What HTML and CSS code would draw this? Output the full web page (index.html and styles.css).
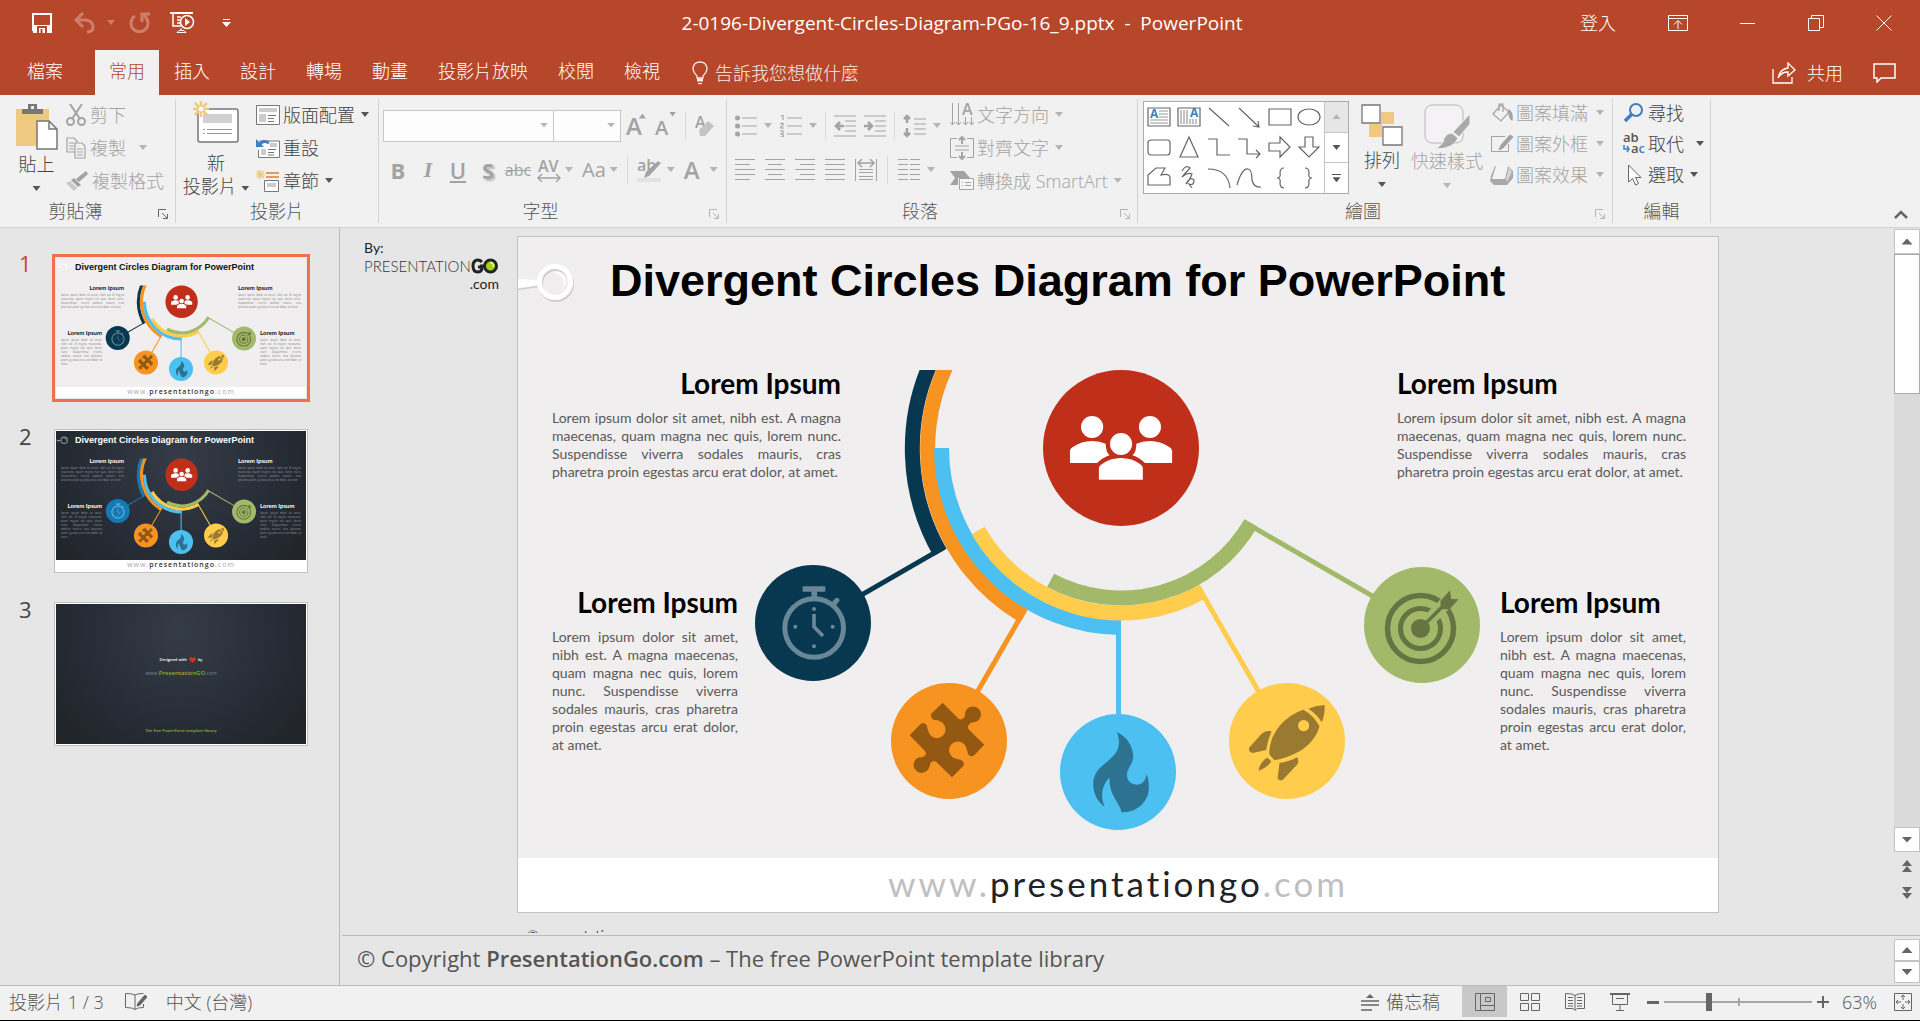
FILE: index.html
```html
<!DOCTYPE html>
<html lang="zh-Hant">
<head>
<meta charset="utf-8">
<title>2-0196-Divergent-Circles-Diagram-PGo-16_9.pptx - PowerPoint</title>
<link rel="stylesheet" href="styles.css">
</head>
<body>
<svg class="defs" aria-hidden="true">
  <symbol id="diagram" viewBox="0 0 1200 675">
    <clipPath id="cut"><rect x="0" y="133" width="1200" height="542"/></clipPath>
    <g fill="none" stroke-width="15">
      <g clip-path="url(#cut)">
        <path class="navy-line" d="M422 315.500A209 209 0 0 1 414.500 122"/>
        <path stroke="#f79320" d="M506 379A194 194 0 0 1 432 121"/>
      </g>
      <path stroke="#4cc0f0" d="M603 390.500A179.500 179.500 0 0 1 423.500 211"/>
      <path stroke="#ffcc4b" d="M685.500 353.900A165 165 0 0 1 460.100 293.500"/>
      <path stroke="#a2b969" d="M732.900 286A150 150 0 0 1 532.600 343.400"/>
    </g>
    <g transform="translate(603 211)">
      <rect class="navy" x="203" width="120" height="5" transform="rotate(150)"/>
      <rect fill="#f79320" x="187" width="110" height="5" transform="rotate(120)"/>
      <rect fill="#4cc0f0" x="173" width="110" height="5" transform="rotate(90)"/>
      <rect fill="#ffcc4b" x="158" width="130" height="5" transform="rotate(60)"/>
      <rect fill="#a2b969" x="143" width="160" height="5" transform="rotate(30)"/>
    </g>
    <circle cx="603" cy="211" r="78" fill="#c02f1a"/>
    <circle class="navy" cx="295" cy="386" r="58"/>
    <circle cx="431" cy="504" r="58" fill="#f79320"/>
    <circle cx="600" cy="535" r="58" fill="#4cc0f0"/>
    <circle cx="769" cy="504" r="58" fill="#ffcc4b"/>
    <circle cx="904" cy="388" r="58" fill="#a2b969"/>
    <g fill="#fff" transform="translate(342 103) scale(.3571 .3333)">
      <ellipse cx="650" cy="261" rx="31" ry="33"/><ellipse cx="812" cy="261" rx="31" ry="33"/><ellipse cx="731" cy="312" rx="31" ry="33"/>
      <path d="M588 369V333Q588 325 596 321Q620 303 650 303Q672 304 688 311Q688 335 699 346Q680 352 664 369Z"/>
      <path d="M874 369V333Q874 325 866 321Q842 303 812 303Q790 304 774 311Q774 335 763 346Q782 352 798 369Z"/>
      <path d="M669 419V385Q669 378 677 373Q700 354 731 354Q762 354 785 373Q792 378 792 385V419Z"/>
    </g>
    <g transform="translate(202 283) scale(.3333)">
      <g class="watch" fill="none">
        <circle cx="282.500" cy="324" r="88" stroke-width="15"/>
        <path stroke-width="17" d="M248 207H316M283 212V232"/>
        <path stroke-width="15" stroke-linecap="round" d="M343 249L351 241"/>
        <path stroke-width="11" d="M282 282V320L309 348"/>
        <path stroke-width="12" stroke-linecap="round" d="M226 320h.1M338 320h.1M282 267h.1M282 379h.1"/>
      </g>
      <path fill="#935811" d="M668 548L714 595Q724 604 733 592Q736 588 735 582A24 24 0 1 1 762 607Q750 606 744 619Q743 624 748 630L793 674L764 704Q752 714 744 702Q742 690 738 682A26 26 0 1 0 702 714Q708 718 722 719Q736 726 730 738L696 772L649 726Q638 718 630 732Q630 739 627 744A24 24 0 1 1 597 712Q610 714 617 705Q620 699 614 692L569 646L602 612Q612 605 620 616Q622 626 625 633A26 26 0 1 0 660 604Q655 600 642 600Q628 592 635 580Z"/>
      <path fill="#2d7391" d="M1190 636C1222 650 1240 680 1240 712C1238 735 1220 745 1221 768C1223 788 1240 794 1252 794C1272 792 1278 778 1279 763C1287 775 1288 800 1285 820C1276 855 1245 878 1204 877C1202 850 1168 830 1168 773C1146 795 1140 830 1154 860C1130 845 1118 815 1120 785C1125 730 1196 722 1197 668C1197 655 1194 645 1190 636Z"/>
    </g>
    <g fill="#9a7a30" fill-rule="evenodd" transform="translate(582 283) scale(.3954 .3333)">
      <path d="M514 569Q540 585 555 619C545 665 510 705 441 721L428 703C428 640 465 590 514 569ZM515 600a14 17 0 1 0 .1 0Z"/>
      <path d="M527 566Q548 556 568 555Q570 580 561 607Q548 582 527 566Z"/>
      <path d="M377 690V683L410 640Q422 630 434 634Q424 660 420 690L386 699Q378 697 377 690Z"/>
      <path d="M402 752Q400 745 408 730Q418 714 424 713L433 724Q424 742 402 752Z"/>
      <path d="M454 729Q480 725 498 712Q504 718 500 732L462 780Q452 784 449 775Z"/>
    </g>
    <g fill="none" stroke="#657442">
      <circle cx="902.500" cy="391.500" r="33" stroke-width="5.500"/>
      <circle cx="902.500" cy="391.500" r="20" stroke-width="5"/>
      <path stroke="#a2b969" stroke-width="13" d="M912 382L938 356"/>
      <circle cx="902.500" cy="391.500" r="9.500" fill="#657442" stroke="none"/>
      <path stroke-width="3.500" d="M903 391L926 368"/>
      <path fill="#657442" stroke="none" d="M922.400 364L932 353.300L933.100 362L940.600 362.300L931.200 372.500L922.800 372Z"/>
    </g>
    <circle class="lens-shade" cx="38" cy="47" r="15.500" fill="none" stroke-width="5"/>
    <path class="lens-shade" d="M0 52.500L20 49.500" stroke-width="1.500"/>
    <g class="lens">
      <path d="M0 42L21 43V48L0 51Z"/>
      <circle cx="37" cy="45" r="15.500" fill="none" stroke-width="5"/>
      <path d="M34 35Q46 37 46 48Q45 52 43 54Q50 47 46 39Q42 33 34 35Z"/>
    </g>
  </symbol>
</svg>

<header class="titlebar">
  <div class="qat">
    <button class="ib" aria-label="儲存"><svg width="20" height="20" fill="none" stroke="#fff" stroke-width="2"><path d="M1 1H19V19H3L1 17Z"/><path fill="#fff" d="M2 13H18V19H2Z"/><path stroke="#b7472a" d="M6 20V14H14V20M9.500 16V20"/></svg></button>
    <button class="ib dim" aria-label="復原"><svg width="42" height="22" fill="none" stroke="#fff" stroke-width="3"><path d="M10 1L3 8L10 15M3 8H13Q20 9 20 15Q20 20 14 20"/><path fill="#fff" stroke="none" d="M34 8H42L38 13Z"/></svg></button>
    <button class="ib dim" aria-label="重複"><svg width="21" height="22" fill="none" stroke="#fff" stroke-width="3"><path d="M6 4A8.500 8.500 0 1 0 15 4M13 10V2H21"/></svg></button>
    <button class="ib" aria-label="從首張投影片"><svg width="25" height="22" fill="none" stroke="#fff"><path stroke-width="2" d="M0 1H23"/><path stroke-width="1.500" d="M3 2V14H11M7 5H11M7 8H10M7 11H10"/><circle cx="17" cy="10" r="6.500" stroke-width="1.500"/><path fill="#fff" stroke="none" d="M15 6V14L20 10Z"/><path d="M11 16V19M7 20.500L9 18.500H14L16 20.500Z"/></svg></button>
    <button class="ib" aria-label="自訂快速存取工具列"><svg width="9" height="9" fill="#fff"><path d="M1 0H8V1H1ZM0 3H9L4.500 8Z"/></svg></button>
  </div>
  <h1 class="doc-title">2-0196-Divergent-Circles-Diagram-PGo-16_9.pptx&nbsp; -&nbsp; PowerPoint</h1>
  <div class="window-controls">
    <button class="signin">登入</button>
    <button class="ib" aria-label="功能區顯示選項"><svg width="20" height="16" fill="none" stroke="#fff"><path d="M.500 .500H19.500V15.500H.500ZM.500 3.500H19.500M10 14V6M6 9.500L10 5.500L14 9.500"/></svg></button>
    <button class="ib" aria-label="最小化"><svg width="16" height="16"><path fill="#fff" d="M0 8H15V9H0Z"/></svg></button>
    <button class="ib" aria-label="還原"><svg width="16" height="16" fill="none" stroke="#fff"><path d="M.500 3.500H11.500V15.500H.500ZM3.500 3V.500H15.500V12.500H12"/></svg></button>
    <button class="ib" aria-label="關閉"><svg width="16" height="16" stroke="#fff"><path d="M.500 .500L15.500 15.500M15.500 .500L.500 15.500"/></svg></button>
  </div>
</header>

<nav class="tabs">
  <button class="tab file">檔案</button>
  <button class="tab active">常用</button>
  <button class="tab">插入</button>
  <button class="tab">設計</button>
  <button class="tab">轉場</button>
  <button class="tab">動畫</button>
  <button class="tab">投影片放映</button>
  <button class="tab">校閱</button>
  <button class="tab">檢視</button>
  <button class="tell"><svg width="16" height="24" fill="none" stroke="#fff" stroke-width="1.300"><path d="M5 17V15Q1 11 1 7Q2 1 8 1Q14 1 15 7Q15 11 11 15V17Z"/><path stroke-width="3" d="M5 19H11"/><path d="M6 22.500H10"/></svg>告訴我您想做什麼</button>
  <button class="share"><svg width="24" height="22" fill="none" stroke="#fff" stroke-width="1.300"><path d="M1 7V21H20V15M6 16Q8 7 16 6V1L23 8L16 14V10Q9 10 6 16Z"/></svg>共用</button>
  <button class="ib" aria-label="註解"><svg width="23" height="20" fill="none" stroke="#fff" stroke-width="1.500"><path d="M1 1H22V15H8L4 19V15H1Z"/></svg></button>
</nav>

<section class="ribbon">
  <div class="group clip">
    <div class="group-body">
      <button class="big"><svg width="42" height="46" fill="none" stroke="#777" stroke-width="1.500"><path fill="#efc980" stroke="none" d="M0 5H33V42H0Z"/><path fill="#777" stroke="none" d="M6 10V5H12V0H21V5H27V10Z"/><path fill="#f1f1f1" stroke="none" d="M15 2H18V5H15Z"/><path fill="#fff" d="M21 17H33L41 25V45H21ZM33 17V25H41"/></svg><span>貼上</span><i class="caret"></i></button>
      <div class="rows">
        <button class="row off"><svg width="20" height="22" fill="none" stroke="#a3a3a3" stroke-width="2"><path d="M4 0L14 15M16 0L6 15"/><circle cx="4.500" cy="17.500" r="3.500"/><circle cx="15.500" cy="17.500" r="3.500"/></svg>剪下</button>
        <button class="row off"><svg width="20" height="22" fill="#f1f1f1" stroke="#a3a3a3" stroke-width="1.200"><path d="M1 1H8L11 4V15H1ZM3 6H8M3 9H8M3 12H8"/><path d="M9 6H16L19 9V21H9ZM11 12H17M11 15H17M11 18H17"/></svg>複製<i class="caret far"></i></button>
        <button class="row off"><svg width="22" height="20" fill="#a3a3a3"><path d="M20 0L22 3L13 11L10 8Z"/><path d="M8 7L15 14L12 16L5 9Z"/><path fill="#c8c8c8" d="M4 10L11 17L8 20L0 12Z"/></svg>複製格式</button>
      </div>
    </div>
    <div class="group-label launch">剪貼簿<svg class="launcher on" width="10" height="10"><use href="#launch"/></svg></div>
  </div>
  <div class="group slides">
    <div class="group-body">
      <button class="big"><svg width="46" height="42" fill="none"><path fill="#fff" stroke="#777" stroke-width="1.500" d="M7 8H43Q45 8 45 10V39Q45 41 43 41H7Q5 41 5 39V10Q5 8 7 8Z"/><path fill="#d0d0d0" d="M10 13H39V22H10Z"/><path stroke="#999" d="M14 28.500H39M14 32.500H39M10 28.500H12M10 32.500H12"/><path stroke="#efc980" stroke-width="2.500" d="M8 0V16M0 8H16M2 2L14 14M14 2L2 14"/><circle cx="8" cy="8" r="3" fill="#fff" stroke="#efc980"/></svg><span>新</span><span>投影片 <i class="caret"></i></span></button>
      <div class="rows">
        <button class="row"><svg width="24" height="20" fill="none" stroke="#777"><path fill="#fff" d="M.500 .500H23.500V19.500H.500Z"/><path fill="#ccc" stroke="none" d="M3 3H21V7H3ZM3 9H10V17H3Z"/><path d="M12 10.500H20M12 13.500H18M12 16.500H18"/></svg>版面配置<i class="caret"></i></button>
        <button class="row"><svg width="24" height="20" fill="none" stroke="#777"><path fill="#fff" d="M3 3H23.500V19.500H2.500V12"/><path fill="#ccc" stroke="none" d="M5 11H10V17H5ZM14 5H21V9H14Z"/><path d="M12 11.500H20M12 14.500H18M12 17H18"/><path stroke="#3f7fbf" stroke-width="3" d="M3 8Q6 1 13 5"/><path fill="#3f7fbf" stroke="none" d="M0 1V9H8Z"/></svg>重設</button>
        <button class="row"><svg width="24" height="22" fill="none"><path stroke="#e08020" stroke-width="1.500" d="M10 3H23M10 7H23"/><path fill="#fff" stroke="#777" d="M8.500 10.500H22.500V21.500H8.500Z"/><path fill="#ccc" d="M11 13H20V17H11Z"/><path stroke="#efc980" stroke-width="1.500" d="M4 0V9M0 4.500H9M1 1L8 8M8 1L1 8"/></svg>章節<i class="caret"></i></button>
      </div>
    </div>
    <div class="group-label">投影片</div>
  </div>
  <div class="group font">
    <div class="group-body stack">
      <div class="line">
        <div class="combos"><span class="combo wide"><select aria-label="字型"><option></option></select><i class="caret pale"></i></span><span class="combo"><select aria-label="字型大小"><option></option></select><i class="caret pale"></i></span></div>
        <button class="glyph" aria-label="放大字型">A<sup class="up"></sup></button>
        <button class="glyph small" aria-label="縮小字型">A<sup class="down"></sup></button>
        <i class="sep"></i>
        <button class="ib" aria-label="清除格式設定"><svg width="20" height="24"><text x="0" y="14" class="a16">A</text><path fill="#c4c4c4" d="M4 16L13 7L19 12L10 22L5 22Z"/></svg></button>
      </div>
      <div class="line two">
        <div class="marks"><button class="b">B</button><button class="i">I</button><button class="u">U</button><button class="s">S</button><button class="abc">abc</button></div>
        <button class="drop"><svg width="24" height="24" fill="none" stroke="#a3a3a3" stroke-width="1.500"><text x="1" y="14" class="a16">AV</text><path d="M1 20H23M5 16L1 20L5 24M19 16L23 20L19 24"/></svg><i class="caret pale"></i></button>
        <button class="drop aa">Aa<i class="caret pale"></i></button>
        <i class="sep"></i>
        <button class="drop"><svg width="26" height="24"><text x="0" y="13" class="a16">ab</text><path fill="#e2e2e2" d="M0 20H24V24H0Z"/><path fill="#a3a3a3" d="M21 3L24 5L12 18L7 20L9 14Z"/></svg><i class="caret pale"></i></button>
        <button class="drop acol">A<i class="caret pale"></i></button>
      </div>
    </div>
    <div class="group-label launch">字型<svg class="launcher" width="10" height="10"><use href="#launch"/></svg></div>
  </div>
  <div class="group para">
    <div class="group-body">
      <div class="stack">
        <div class="line">
          <button class="drop" aria-label="項目符號"><svg width="22" height="22" stroke="#a3a3a3" stroke-width="1.200" fill="#a3a3a3"><path d="M7 3H22M7 11H22M7 19H22"/><circle cx="2.500" cy="3" r="2"/><circle cx="2.500" cy="11" r="2"/><circle cx="2.500" cy="19" r="2"/></svg><i class="caret pale"></i></button>
          <button class="drop" aria-label="編號"><svg width="22" height="22" stroke="#a3a3a3" stroke-width="1.200" fill="none"><path d="M7 3H22M7 11H22M7 19H22M1 1L3 0V5M0 9Q4 7 3 10L0 13H4M0 16Q4 15 3 18L1 19Q5 20 3 22H0"/></svg><i class="caret pale"></i></button>
          <i class="sep"></i>
          <button class="ib" aria-label="減少清單階層"><svg width="22" height="22" stroke="#a3a3a3" stroke-width="1.200" fill="none"><path d="M0 1H22M11 6H22M11 11H22M11 16H22M0 21H22"/><path stroke-width="2.500" d="M10 11H2M6 7L2 11L6 15"/></svg></button>
          <button class="ib" aria-label="增加清單階層"><svg width="22" height="22" stroke="#a3a3a3" stroke-width="1.200" fill="none"><path d="M0 1H22M11 6H22M11 11H22M11 16H22M0 21H22"/><path stroke-width="2.500" d="M0 11H8M4 7L8 11L4 15"/></svg></button>
          <i class="sep"></i>
          <button class="drop" aria-label="行距"><svg width="23" height="24" stroke="#a3a3a3" stroke-width="1.200" fill="none"><path d="M11 5H23M11 10H23M11 15H23M11 20H23"/><path stroke-width="2.500" d="M4 2V9M1 5L4 2L7 5M4 14V22M1 19L4 22L7 19"/></svg><i class="caret pale"></i></button>
        </div>
        <div class="line two aligns">
          <button class="ib" aria-label="靠左對齊"><svg width="20" height="22" stroke="#a3a3a3"><path d="M0 .500H20M0 5.500H15M0 10.500H20M0 15.500H20M0 20.500H15"/></svg></button>
          <button class="ib" aria-label="置中"><svg width="20" height="22" stroke="#a3a3a3"><path d="M0 .500H20M3 5.500H17M0 10.500H20M3 15.500H17M0 20.500H20"/></svg></button>
          <button class="ib" aria-label="靠右對齊"><svg width="20" height="22" stroke="#a3a3a3"><path d="M0 .500H20M5 5.500H20M0 10.500H20M5 15.500H20M0 20.500H20"/></svg></button>
          <button class="ib" aria-label="左右對齊"><svg width="20" height="22" stroke="#a3a3a3"><path d="M0 .500H20M0 5.500H20M0 10.500H20M0 15.500H20M0 20.500H20"/></svg></button>
          <button class="ib" aria-label="分散對齊"><svg width="22" height="22" stroke="#a3a3a3" fill="none"><path d="M.500 0V22M21.500 0V22M4 10.500H18M4 13.500H18M4 17.500H18M4 20.500H18"/><path stroke-width="1.500" d="M3 4H19M7 0L3 4L7 8M15 0L19 4L15 8"/></svg></button>
          <i class="sep"></i>
          <button class="drop" aria-label="欄"><svg width="22" height="22" stroke="#a3a3a3"><path d="M0 .500H10M12 .500H22M0 5.500H10M12 5.500H22M0 10.500H10M12 10.500H22M0 15.500H10M12 15.500H22M0 20.500H10M12 20.500H22"/></svg><i class="caret pale"></i></button>
        </div>
      </div>
      <div class="rows">
        <button class="row off"><svg width="24" height="24" fill="none" stroke="#a3a3a3"><path d="M2.500 0V22M8.500 0V22M15.500 14V22M21.500 14V22M0 19L2.500 22L5 19M6 19L8.500 22L11 19M13 19L15.500 22L18 19M19 19L21.500 22L24 19"/><text x="12" y="12" class="a16">A</text></svg>文字方向<i class="caret"></i></button>
        <button class="row off"><svg width="24" height="24" fill="none" stroke="#a3a3a3"><path d="M7 2.500H.500V21.500H7M17 2.500H23.500V21.500H17M5 10H19M5 14H19"/><path stroke-width="2" d="M12 8V2M9 4L12 1L15 4M12 16V22M9 20L12 23L15 20"/></svg>對齊文字<i class="caret"></i></button>
        <button class="row off"><svg width="24" height="20" fill="#a3a3a3"><path d="M0 0H14L20 7H8V14H0L5 7Z"/><path fill="#f6f6f6" stroke="#a3a3a3" d="M9.500 7.500H23.500V18.500H9.500Z"/><path stroke="#a3a3a3" d="M12 11.500H13M15 11.500H21M12 14.500H13M15 14.500H21"/></svg>轉換成 SmartArt<i class="caret"></i></button>
      </div>
    </div>
    <div class="group-label launch">段落<svg class="launcher" width="10" height="10"><use href="#launch"/></svg></div>
  </div>
  <div class="group draw">
    <div class="group-body">
      <div class="gallery">
        <svg width="180" height="91" fill="none" stroke="#666" stroke-width="1.200">
          <path d="M4 6H26V24H4ZM34 6H56V24H34Z"/><path stroke="#999" d="M15 9H24M15 12H24M15 15H24M6 18H24M6 21H24M37 8V22M40 8V22M43 8V22M46 17V22M49 17V22M52 17V22"/>
          <text x="6" y="16" class="blue">A</text><text x="46" y="15" class="blue">A</text>
          <path d="M65 6L85 24M95 6L115 25M109 24L115 25L114 19M125 7H147V23H125Z"/><ellipse cx="165" cy="15" rx="11" ry="8"/>
          <rect x="4" y="38" width="22" height="15" rx="3"/><path d="M45 35L54 55H36ZM64 37H73V53H86M94 37H103V52H116M112 48L116 52L112 56M125 41H136V35L146 45L136 55V49H125ZM161 35H169V45H175L165 55L155 45H161Z"/>
          <path d="M4 83V73L12 66H21L17 73Q25 71 26 75V83ZM38 69Q42 62 46 66L38 75Q44 70 48 72Q46 78 42 82Q46 74 50 78Q50 84 45 82L48 86M64 67Q84 67 86 86M93 83Q98 66 104 67Q108 67 108 78Q110 86 117 85M140 66Q136 66 136 71Q137 76 133 76Q137 76 136 81Q136 86 140 86M161 66Q165 66 165 71Q164 76 168 76Q164 76 165 81Q165 86 161 86"/>
        </svg>
        <div class="gallery-nav"><button class="gn dis" aria-label="上一列"><i class="caret flip pale"></i></button><button class="gn" aria-label="下一列"><i class="caret"></i></button><button class="gn more" aria-label="其他"><i class="caret"></i></button></div>
      </div>
      <button class="big"><svg width="42" height="42" stroke="#777" fill="#fff" stroke-width="1.300"><path fill="#efc980" stroke="none" d="M20 8H33V20H20ZM8 20H21V33H8Z"/><path d="M1 1H19V19H1ZM22 23H41V41H22Z"/></svg><span>排列</span><i class="caret"></i></button>
      <button class="big off"><svg width="46" height="46"><rect x="1" y="1" width="38" height="38" rx="7" fill="#f4f2f5" stroke="#b5b5b5"/><path fill="#a9a9a9" stroke="#f1f1f1" d="M46 10V20L35 33L29 28ZM28 29L34 34Q30 45 11 45Q20 40 20 34Q23 29 28 29Z"/></svg><span>快速樣式</span><i class="caret"></i></button>
      <div class="rows tight">
        <button class="row off"><svg width="23" height="20" fill="none" stroke="#a3a3a3" stroke-width="1.200"><path d="M11 2L3 11L11 18L19 9ZM9 8V1H13V9"/><path fill="#a3a3a3" d="M19 7Q23 10 22 17Q19 15 19 9Z"/></svg>圖案填滿<i class="caret"></i></button>
        <button class="row off"><svg width="23" height="20" fill="none" stroke="#a3a3a3"><path d="M15 2.500H1.500V17.500H18.500V10"/><path fill="#a3a3a3" d="M20 1L23 3L13 14L9 16L11 11Z"/></svg>圖案外框<i class="caret"></i></button>
        <button class="row off"><svg width="23" height="20"><path fill="#a9a9a9" d="M5 1H18L23 6V13L17 20H4L0 16L1 11Z"/><path fill="#f4f4f4" d="M6 1H18L15 14H2Z"/><path fill="#d5d5d5" d="M19 2L22 7L17 17L16 14Z"/></svg>圖案效果<i class="caret"></i></button>
      </div>
    </div>
    <div class="group-label launch">繪圖<svg class="launcher" width="10" height="10"><use href="#launch"/></svg></div>
  </div>
  <div class="group edit">
    <div class="group-body">
      <div class="rows tight">
        <button class="row"><svg width="22" height="20" fill="none" stroke="#3f7fbf"><circle cx="13" cy="7" r="6" stroke-width="2"/><path stroke-width="3.500" d="M9 11L2 18"/></svg>尋找</button>
        <button class="row"><svg width="22" height="22"><text x="0" y="9" class="rep">ab</text><text x="8" y="20" class="rep">a<tspan fill="#3f7fbf">c</tspan></text><path fill="none" stroke="#3f7fbf" stroke-width="1.500" d="M1 12V16H6M4 13L6 16L4 19"/></svg>取代<i class="caret far"></i></button>
        <button class="row"><svg width="22" height="22" fill="#fff" stroke="#666"><path d="M5.500 1V18L9.500 14.500L12.500 21L15.500 19.500L12.500 13.500H18Z"/></svg>選取<i class="caret"></i></button>
      </div>
    </div>
    <div class="group-label">編輯</div>
  </div>
  <button class="collapse" aria-label="摺疊功能區"><svg width="14" height="9" fill="none" stroke="#666" stroke-width="2.500"><path d="M1 8L7 2L13 8"/></svg></button>
</section>
<svg class="defs" aria-hidden="true"><symbol id="launch" viewBox="0 0 10 10"><path fill="none" stroke="currentColor" d="M.500 8V.500H8M4 4L9 9M9.500 5V9.500H5"/></symbol></svg>

<main class="work">
  <aside class="pane">
    <div class="item current"><span class="num">1</span>
      <div class="thumb light">
        <svg class="art" viewBox="0 0 1200 675"><use href="#diagram"/></svg>
        <b class="t-title">Divergent Circles Diagram for PowerPoint</b>
        <div class="t-text tl"><b>Lorem Ipsum</b><p>Lorem ipsum dolor sit amet, nibh est. A magna maecenas, quam magna nec quis, lorem nunc. Suspendisse viverra sodales mauris, cras pharetra proin egestas arcu erat dolor, at amet.</p></div>
        <div class="t-text tr"><b>Lorem Ipsum</b><p>Lorem ipsum dolor sit amet, nibh est. A magna maecenas, quam magna nec quis, lorem nunc. Suspendisse viverra sodales mauris, cras pharetra proin egestas arcu erat dolor, at amet.</p></div>
        <div class="t-text bl"><b>Lorem Ipsum</b><p>Lorem ipsum dolor sit amet, nibh est. A magna maecenas, quam magna nec quis, lorem nunc. Suspendisse viverra sodales mauris, cras pharetra proin egestas arcu erat dolor, at amet.</p></div>
        <div class="t-text br"><b>Lorem Ipsum</b><p>Lorem ipsum dolor sit amet, nibh est. A magna maecenas, quam magna nec quis, lorem nunc. Suspendisse viverra sodales mauris, cras pharetra proin egestas arcu erat dolor, at amet.</p></div>
        <div class="t-foot">www.<b>presentationgo</b>.com</div>
      </div>
    </div>
    <div class="item"><span class="num">2</span>
      <div class="thumb dark">
        <svg class="art" viewBox="0 0 1200 675"><use href="#diagram"/></svg>
        <b class="t-title">Divergent Circles Diagram for PowerPoint</b>
        <div class="t-text tl"><b>Lorem Ipsum</b><p>Lorem ipsum dolor sit amet, nibh est. A magna maecenas, quam magna nec quis, lorem nunc. Suspendisse viverra sodales mauris, cras pharetra proin egestas arcu erat dolor, at amet.</p></div>
        <div class="t-text tr"><b>Lorem Ipsum</b><p>Lorem ipsum dolor sit amet, nibh est. A magna maecenas, quam magna nec quis, lorem nunc. Suspendisse viverra sodales mauris, cras pharetra proin egestas arcu erat dolor, at amet.</p></div>
        <div class="t-text bl"><b>Lorem Ipsum</b><p>Lorem ipsum dolor sit amet, nibh est. A magna maecenas, quam magna nec quis, lorem nunc. Suspendisse viverra sodales mauris, cras pharetra proin egestas arcu erat dolor, at amet.</p></div>
        <div class="t-text br"><b>Lorem Ipsum</b><p>Lorem ipsum dolor sit amet, nibh est. A magna maecenas, quam magna nec quis, lorem nunc. Suspendisse viverra sodales mauris, cras pharetra proin egestas arcu erat dolor, at amet.</p></div>
        <div class="t-foot">www.<b>presentationgo</b>.com</div>
      </div>
    </div>
    <div class="item"><span class="num">3</span>
      <div class="thumb dark credits">
        <p class="c-by">Designed with <svg width="7" height="6" viewBox="0 0 7 6"><path fill="#d2321e" d="M3.500 6L0 2.500Q0 0 2 0L3.500 1L5 0Q7 0 7 2.500Z"/></svg> by</p>
        <p class="c-www">www.<span>PresentationGO</span>.com</p>
        <p class="c-lib">The free PowerPoint template library</p>
      </div>
    </div>
  </aside>
  <div class="editor">
    <div class="stage-row">
      <div class="stage">
        <div class="slide">
          <div class="brand"><span>By:</span><span class="logo">PRESENTATION<svg width="27" height="16" fill="none" stroke="#222" stroke-width="3"><path d="M11 4Q9 2 7 2Q2 2 2 8Q2 14 7 14Q11 14 11 9H7M9 8H14"/><circle cx="19.500" cy="8" r="6" fill="#a4d20a"/><path stroke="#e8f7b0" stroke-width="1.500" d="M19 4.500Q23 5 22.500 9"/></svg></span><span class="com">.com</span></div>
          <svg class="art" viewBox="0 0 1200 675"><use href="#diagram"/></svg>
          <h2 class="s-title">Divergent Circles Diagram for PowerPoint</h2>
          <div class="s-text tl"><h3>Lorem Ipsum</h3><p>Lorem ipsum dolor sit amet, nibh est. A magna maecenas, quam magna nec quis, lorem nunc. Suspendisse viverra sodales mauris, cras pharetra proin egestas arcu erat dolor, at amet.</p></div>
          <div class="s-text tr"><h3>Lorem Ipsum</h3><p>Lorem ipsum dolor sit amet, nibh est. A magna maecenas, quam magna nec quis, lorem nunc. Suspendisse viverra sodales mauris, cras pharetra proin egestas arcu erat dolor, at amet.</p></div>
          <div class="s-text bl"><h3>Lorem Ipsum</h3><p>Lorem ipsum dolor sit amet, nibh est. A magna maecenas, quam magna nec quis, lorem nunc. Suspendisse viverra sodales mauris, cras pharetra proin egestas arcu erat dolor, at amet.</p></div>
          <div class="s-text br"><h3>Lorem Ipsum</h3><p>Lorem ipsum dolor sit amet, nibh est. A magna maecenas, quam magna nec quis, lorem nunc. Suspendisse viverra sodales mauris, cras pharetra proin egestas arcu erat dolor, at amet.</p></div>
          <div class="s-foot">www.<b>presentationgo</b>.com</div>
          <div class="below">© presentationgo.com</div>
        </div>
      </div>
      <div class="scroll">
        <button class="sb" aria-label="向上捲動"><i class="caret flip"></i></button>
        <div class="track"><div class="grip"></div></div>
        <button class="sb" aria-label="向下捲動"><i class="caret"></i></button>
        <button class="jump" aria-label="上一張投影片"><i class="caret flip"></i><i class="caret flip"></i></button>
        <button class="jump" aria-label="下一張投影片"><i class="caret"></i><i class="caret"></i></button>
      </div>
    </div>
    <div class="notes"><p>© Copyright <b>PresentationGo.com</b> – The free PowerPoint template library</p>
      <div class="notes-scroll"><button class="sb" aria-label="向上"><i class="caret flip"></i></button><button class="sb" aria-label="向下"><i class="caret"></i></button></div>
    </div>
  </div>
</main>

<footer class="status">
  <span>投影片 1 / 3</span>
  <button class="ib" aria-label="校對"><svg width="22" height="18" fill="none" stroke="#666"><path d="M10 2Q8 .500 .500 .500V14.500Q8 14.500 10 16.500Q12 14.500 18.500 14.500V11M10 2Q12 .500 18.500 .500M10 2V16.500"/><path fill="#666" d="M20 2L22 4L15 12L12 13L13 10Z"/></svg></button>
  <span class="lang">中文 (台灣)</span>
  <button class="notes-btn"><svg width="18" height="18" fill="none" stroke="#666" stroke-width="1.500"><path fill="#666" stroke="none" d="M5 5L9 1L13 5Z"/><path d="M0 8H18M0 12H18M0 17H11"/></svg>備忘稿</button>
  <button class="view on" aria-label="標準模式"><svg width="20" height="18" fill="none" stroke="#666"><path d="M.500 .500H19.500V17.500H.500ZM5.500 0V18M5.500 12.500H19.500M10.500 4.500H15.500V8.500H10.500Z"/></svg></button>
  <button class="view" aria-label="投影片瀏覽"><svg width="20" height="18" fill="none" stroke="#666"><path d="M.500 .500H8.500V7.500H.500ZM11.500 .500H19.500V7.500H11.500ZM.500 10.500H8.500V17.500H.500ZM11.500 10.500H19.500V17.500H11.500Z"/></svg></button>
  <button class="view" aria-label="閱讀檢視"><svg width="20" height="18" fill="none" stroke="#666"><path d="M10 2.500Q8 .500 .500 .500V15.500H8L10 17.500L12 15.500H19.500V.500Q12 .500 10 2.500V17M3 4.500H8M3 7.500H8M3 10.500H8M3 13H8M12 4.500H17M12 7.500H17M12 10.500H17M12 13H17"/></svg></button>
  <button class="view" aria-label="投影片放映"><svg width="20" height="18" fill="none" stroke="#666"><path stroke-width="2" d="M0 1H20"/><path d="M2.500 2V11.500H17.500V2M6 5.500H14M10 12V17M6 17.500H14"/></svg></button>
  <button class="zb" aria-label="縮小"><svg width="12" height="12"><path fill="#666" d="M0 5H12V8H0Z"/></svg></button>
  <span class="zoom"><input type="range" min="10" max="400" value="125" aria-label="縮放"></span>
  <button class="zb" aria-label="放大"><svg width="12" height="12"><path fill="#666" d="M0 5H12V7H0ZM5 0H7V12H5Z"/></svg></button>
  <span class="pct">63%</span>
  <button class="ib" aria-label="調整至視窗大小"><svg width="18" height="18" fill="none" stroke="#666"><path d="M.500 .500H17.500V17.500H.500ZM9 2V7M7 4L9 2L11 4M9 16V11M7 14L9 16L11 14M2 9H7M4 7L2 9L4 11M16 9H11M14 7L16 9L14 11"/></svg></button>
</footer>
</body>
</html>
```
FILE: styles.css
```css
* { box-sizing: border-box; }
body { margin: 0; height: 100vh; display: flex; flex-direction: column; overflow: hidden; background: #e6e6e6; color: #444; border-bottom: 1px solid #000; font: 300 18px/24px "Open Sans", "Noto Sans CJK TC", sans-serif; }
h1, h2, h3, p { margin: 0; font-weight: inherit; }
button { border: 0; padding: 0; background: none; color: inherit; font: inherit; white-space: nowrap; }
svg { display: block; flex: none; }
.defs { position: absolute; width: 0; height: 0; }
.ib { display: flex; align-items: center; }
.caret { display: inline-block; flex: none; width: 8px; height: 5px; background: #555; clip-path: polygon(0 0, 100% 0, 50% 100%); }
.caret.flip { clip-path: polygon(0 100%, 100% 100%, 50% 0); }
.caret.pale, .off .caret { background: #b4b4b4; }

/* title bar */
.titlebar { display: grid; grid-template-columns: 1fr auto 1fr; align-items: center; height: 48px; padding: 0 28px 2px 32px; background: #b7472a; color: #fff; }
.qat { display: grid; grid-template-columns: 41px 56px 41px 52px 9px; align-items: center; }
.qat .dim { opacity: .3; }
.doc-title { font-size: 19px; font-weight: 400; white-space: nowrap; }
.window-controls { display: flex; align-items: center; justify-content: flex-end; gap: 52px; }

/* tabs */
.tabs { display: flex; align-items: stretch; height: 47px; padding: 2px 24px 0 0; background: #b7472a; color: #fff; }
.tab { padding: 0 15px 4px; }
.tab.file { padding-left: 27px; padding-right: 32px; }
.tab.active { background: #f1f1f1; color: #b7472a; padding-left: 14px; padding-right: 14px; }
.tell, .share { display: flex; align-items: center; gap: 7px; }
.tell { margin-left: 17px; opacity: .9; }
.share { margin-left: auto; margin-right: 30px; gap: 11px; }

/* ribbon */
.ribbon { display: flex; height: 133px; padding: 4px 0; background: #f1f1f1; border-bottom: 1px solid #d2d2d2; flex: none; }
.group { display: flex; flex-direction: column; flex: none; height: 124px; border-right: 1px solid #d2d2d2; }
.group-body { display: flex; height: 103px; }
.group-label { position: relative; text-align: center; line-height: 24px; color: #555; }
.group-label.launch { padding-right: 24px; }
.launcher { position: absolute; right: 7px; bottom: 4px; color: #b4b4b4; }
.launcher.on { color: #666; }
.clip { width: 176px; }
.slides { width: 203px; }
.font { width: 348px; }
.para { width: 411px; }
.draw { width: 475px; }
.edit { width: 98px; }
.big { display: flex; flex-direction: column; align-items: center; line-height: 23px; padding-top: 5px; }
.big svg { margin-bottom: 3px; }
.big > .caret { margin-top: 10px; }
.clip .big { width: 66px; padding-left: 7px; }
.slides .big { width: 80px; padding-top: 2px; }
.slides .big svg { margin-bottom: 9px; }
.slides .big span .caret { vertical-align: middle; }
.rows { display: flex; flex-direction: column; margin-top: -1px; }
.row { display: flex; align-items: center; gap: 3px; height: 33px; }
.row .caret { margin-left: 3px; }
.tight { margin-top: -2px; }
.tight .row { height: 31px; }
.row .far { margin-left: 9px; }
.clip .row { gap: 4px; }
.off { color: #a3a3a3; }
.stack { display: flex; flex-direction: column; padding: 11px 0 0 5px; }
.line { display: flex; align-items: center; gap: 9px; height: 31px; color: #a3a3a3; }
.line.two { margin-top: 13px; }
.sep { width: 1px; height: 28px; background: #d8d8d8; flex: none; }
.combos { display: flex; }
.combo { position: relative; width: 68px; }
.combo.wide { width: 171px; margin-right: -1px; }
.combo select { display: block; appearance: none; width: 100%; height: 32px; border: 1px solid #c6c6c6; border-radius: 0; background: #fdfdfd; font-size: 16px; }
.combo .caret { position: absolute; right: 6px; top: 13px; }
.glyph { position: relative; font-size: 24px; font-weight: 600; margin-left: -4px; padding-right: 4px; }
.glyph.small { font-size: 20px; padding-top: 4px; margin-left: 0; padding-right: 8px; }
.glyph sup { position: absolute; right: 0; top: 0; width: 7px; height: 5px; background: #a3a3a3; clip-path: polygon(0 100%, 100% 100%, 50% 0); }
.glyph sup.down { clip-path: polygon(0 0, 100% 0, 50% 100%); }
.marks { display: grid; grid-template-columns: repeat(5, 30px); font-size: 22px; font-weight: 700; margin-right: -5px; }
.marks .i { font-family: "Liberation Serif", serif; font-style: italic; }
.marks .u { font-weight: 600; text-decoration: underline; }
.marks .s { text-shadow: 2px 2px 2px #bbb; }
.marks .abc { font-size: 16px; font-weight: 400; text-decoration: line-through; }
.drop { display: flex; align-items: center; gap: 4px; font-weight: 400; }
.aa { font-size: 20px; }
.acol { font-size: 24px; font-weight: 600; gap: 10px; }
.a16 { font: 600 16px "Open Sans", sans-serif; fill: #a3a3a3; stroke: none; }
.blue { font: 700 12px "Open Sans", sans-serif; fill: #3f7fbf; stroke: none; }
.rep { font: 600 13px "Open Sans", sans-serif; fill: #555; }
.font .stack { padding-left: 4px; }
.para .stack { padding-left: 8px; width: 223px; }
.para .line { gap: 8px; }
.para .drop { gap: 7px; }
.para .aligns { gap: 10px; }
.draw .group-body { padding-left: 5px; }
.gallery { display: flex; width: 206px; height: 93px; margin: 2px 10px 0 0; border: 1px solid #ababab; background: #fff; }
.gallery-nav { display: flex; flex-direction: column; flex: 1; border-left: 1px solid #c6c6c6; }
.gn { flex: 1; display: flex; align-items: center; justify-content: center; border-bottom: 1px solid #c6c6c6; }
.gn:last-child { border-bottom: 0; flex-direction: column; gap: 2px; }
.gn.more::before { content: ""; width: 9px; height: 1px; background: #555; }
.gn.dis { background: #e6e6e6; }
.draw .big { width: 46px; }
.draw .big.off { width: 76px; margin: 0 5px 0 4px; }
.draw .big.off svg { margin-bottom: 0; }
.draw .rows .caret { margin-left: 5px; }
.edit .rows { padding-left: 10px; }
.collapse { margin: auto 12px 4px auto; }

/* workspace */
.work { display: flex; flex: 1; min-height: 0; }
.pane { width: 340px; border-right: 1px solid #bcbcbc; padding-top: 27px; flex: none; }
.item { display: flex; height: 173px; }
.num { width: 54px; padding: 0 0 0 19px; font: 400 22px/16px "Open Sans", sans-serif; flex: none; }
.current .num { color: #c8472a; }
.thumb { position: relative; width: 254px; height: 144px; border: 1px solid #c0c0c0; box-shadow: inset 0 0 0 1px #fff; padding: 1px; background-clip: content-box; font-family: Lato, sans-serif; margin-top: 1px; }
.current .thumb { box-shadow: 0 0 0 2px #f07050; border-color: #f07050; }
.light { background-color: #f0eeef; --navy: #07384f; --watch: #6a8797; --lens: #fff; --head: #111; --copy: #555; }
.dark { background-image: radial-gradient(circle at 50% 20%, #343c47, #262c35 60%, #202327); --navy: #147ab6; --watch: #6fb2dc; --lens: #8a8f96; --shade: transparent; --head: #fff; --copy: #b5b8bd; }
.navy { fill: var(--navy, #07384f); }
.navy-line { stroke: var(--navy, #07384f); }
.watch { stroke: var(--watch, #6a8797); }
.lens { fill: var(--lens, #fff); stroke: var(--lens, #fff); }
.lens path { stroke: none; }
.lens-shade { stroke: var(--shade, #cfcdce); }
.art { position: absolute; inset: 0; width: 100%; height: 100%; }
.thumb .art { inset: 1px; width: 250px; height: 140px; }
.t-title { position: absolute; left: 20px; top: 5px; font: 700 9px/10px "Liberation Sans", sans-serif; color: var(--head); white-space: nowrap; }
.t-text { position: absolute; font-size: 3px; line-height: 4px; color: var(--copy); text-align: justify; }
.t-text b { display: block; font-size: 6px; line-height: 7px; font-weight: 700; color: var(--head); margin-bottom: 2px; }
.t-text.tl, .t-text.tr { top: 27px; width: 63px; }
.t-text.bl, .t-text.br { top: 72px; width: 41px; }
.t-text.tl, .t-text.bl { left: 6px; }
.t-text.tr, .t-text.br { right: 6px; }
.tl b, .bl b { text-align: right; }
.t-foot { position: absolute; left: 1px; right: 1px; bottom: 1px; height: 11px; background: #fff; text-align: center; font: 400 7px/9px "Open Sans", sans-serif; letter-spacing: 1px; color: #aaa; }
.t-foot b { color: #333; font-weight: 600; }
.credits { display: flex; flex-direction: column; align-items: center; font: 600 4px/8px "Open Sans", sans-serif; color: #fff; }
.c-by { display: flex; align-items: center; gap: 2px; margin-top: 52px; }
.c-www { margin-top: 5px; color: #6a727c; font-size: 5px; }
.c-www span { font-size: 6px; color: #8cb024; }
.c-lib { margin-top: 50px; color: #94b52a; }

.editor { flex: 1; min-width: 0; display: flex; flex-direction: column; }
.stage-row { flex: 1; display: flex; min-height: 0; }
.stage { flex: 1; overflow: hidden; padding: 8px 0 0 2px; margin-bottom: 2px; }
.slide { position: relative; width: 1202px; height: 677px; margin: 0 auto; border: 1px solid #c3c3c3; background: #f0eeef; font-family: Lato, sans-serif; font-weight: 400; }
.brand { position: absolute; left: -154px; top: 2px; width: 135px; display: flex; flex-direction: column; font: 400 14px/18px Lato, sans-serif; color: #222; }
.logo { display: flex; align-items: center; font: 300 15px/18px Lato, sans-serif; color: #333; }
.com { align-self: flex-end; }
.s-title { position: absolute; left: 92px; top: 18px; font: 700 45px/52px "Liberation Sans", sans-serif; color: #000; white-space: nowrap; }
.s-text { position: absolute; font-size: 14px; line-height: 18px; color: #595959; text-align: justify; }
.s-text h3 { font-size: 28px; line-height: 36px; font-weight: 700; color: #000; margin-bottom: 8px; text-align: left; }
.s-text.tl h3, .s-text.bl h3 { text-align: right; }
.s-text.tl, .s-text.tr { top: 128px; width: 289px; }
.s-text.bl, .s-text.br { top: 347px; width: 186px; }
.s-text.tl, .s-text.bl { left: 34px; }
.s-text.tr, .s-text.br { right: 32px; }
.s-foot { position: absolute; left: 0; right: 0; bottom: 0; height: 54px; background: #fff; text-align: center; font-size: 35px; line-height: 50px; letter-spacing: 3px; color: #bfbfbf; }
.s-foot b { font-weight: 400; color: #1f2328; }
.below { position: absolute; left: 9px; top: 689px; font-size: 14px; line-height: 18px; color: #444; white-space: nowrap; }

.scroll { width: 26px; display: flex; flex-direction: column; padding: 1px 0 29px; align-items: stretch; }
.sb { height: 25px; border: 1px solid #c3c3c3; background: #fff; display: flex; align-items: center; justify-content: center; }
.sb .caret { width: 11px; height: 6px; background: #666; }
.track { flex: 1; background: #dadada; }
.grip { height: 140px; border: 1px solid #ababab; background: #fff; }
.jump { display: flex; flex-direction: column; align-items: center; padding-top: 8px; height: 27px; }
.jump .caret { width: 10px; height: 6px; background: #666; }
.notes { display: flex; margin-left: 2px; height: 50px; border-top: 1px solid #bcbcbc; font-size: 22px; line-height: 44px; font-weight: 400; color: #555; padding-left: 15px; }
.notes b { font-weight: 600; }
.notes-scroll { margin: 3px 0 0 auto; width: 26px; }
.notes-scroll .sb { width: 100%; height: 22px; }

/* status bar */
.status { display: flex; align-items: center; height: 35px; flex: none; padding: 0 8px 3px 9px; background: #f1f1f1; border-top: 1px solid #bcbcbc; color: #555; }
.status .ib { margin: 0 19px 0 21px; }
.notes-btn { display: flex; align-items: center; gap: 7px; margin: 0 22px 0 auto; }
.view { display: flex; align-items: center; justify-content: center; width: 45px; height: 31px; }
.view.on { background: #c8c8c8; }
.zb { margin: 0 5px; }
.zoom { position: relative; width: 148px; display: flex; }
.zoom::after { content: ""; position: absolute; left: 74px; top: 5px; width: 2px; height: 8px; background: #a6a6a6; }
.zoom input { appearance: none; width: 100%; height: 18px; margin: 0; background: linear-gradient(#a6a6a6, #a6a6a6) center / 100% 2px no-repeat; }
.zoom input::-webkit-slider-thumb { appearance: none; width: 6px; height: 18px; background: #666; border-radius: 0; }
.pct { width: 52px; padding-left: 8px; }
.status .pct + .ib { margin: 0; margin-left: 8px; }
```
